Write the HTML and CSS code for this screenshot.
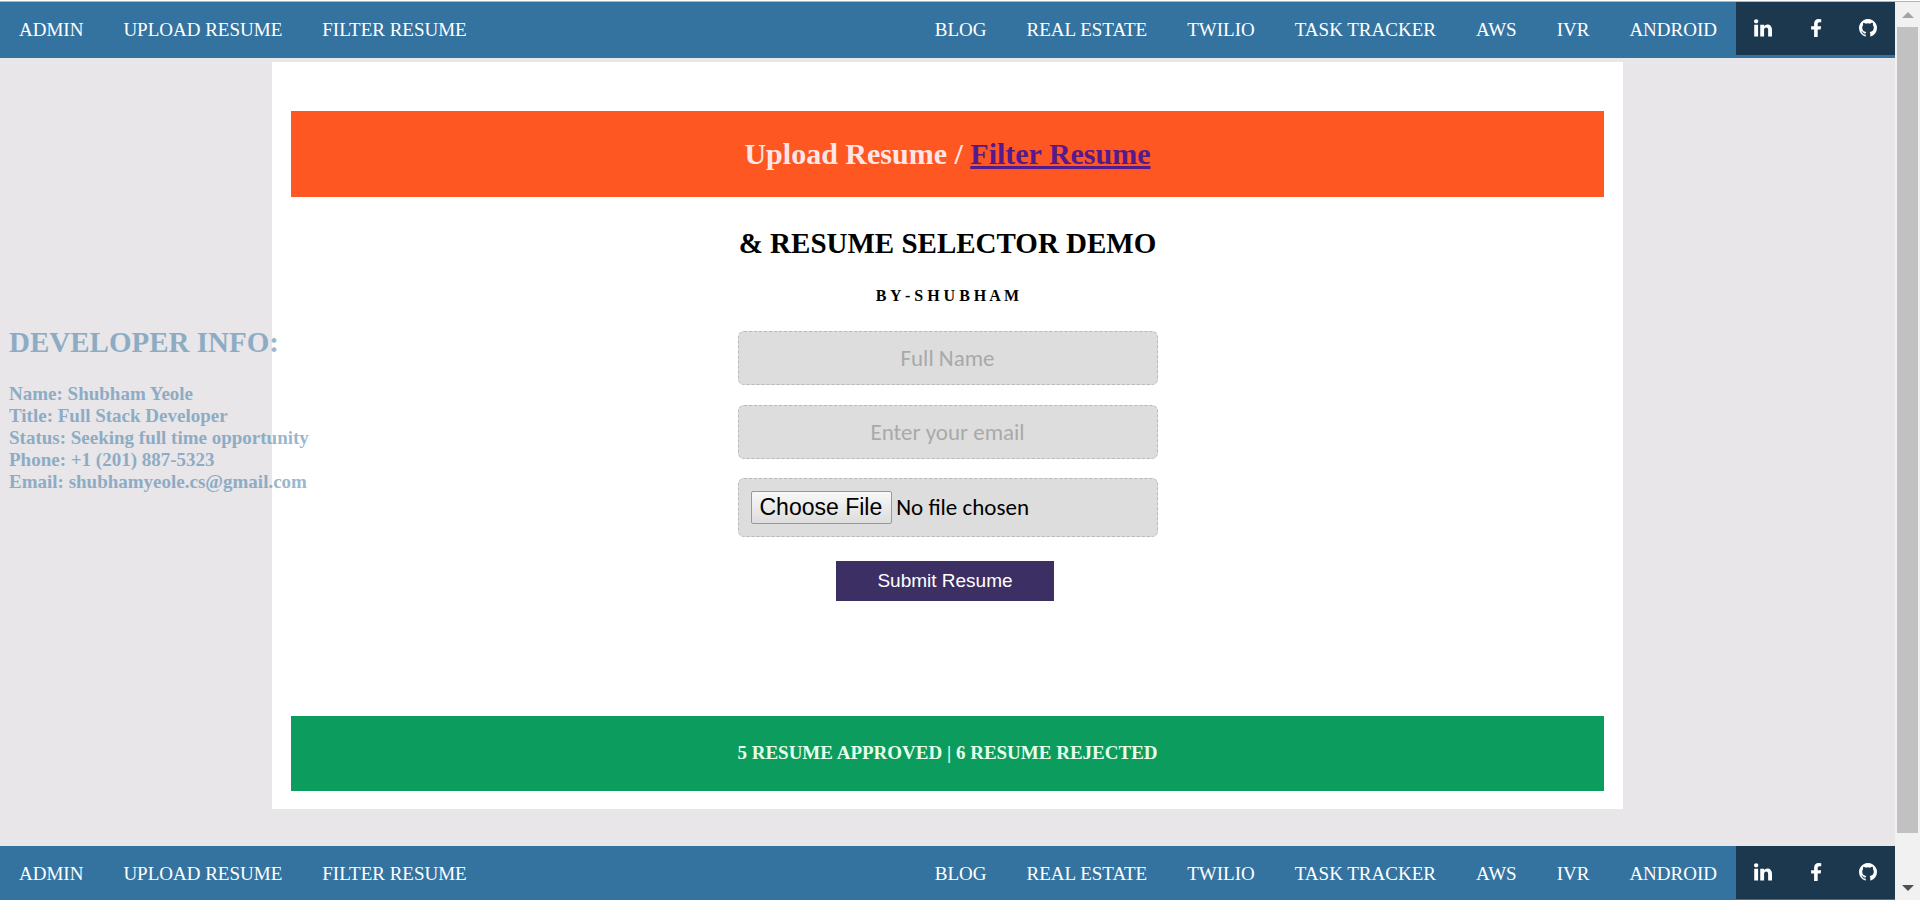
FILE: index.html
```html
<!DOCTYPE html>
<html lang="en">
<head>
<meta charset="utf-8">
<title>Resume Selector</title>
<link rel="stylesheet" href="styles.css">
</head>
<body>
<svg class="sprite" aria-hidden="true">
  <symbol id="linkedin" viewBox="0 128 1536 1536"><path d="M349 625v991h-330v-991h330zm21-306q1 73-50.500 122t-135.500 49h-2q-82 0-132-49t-50-122q0-74 51.500-122.500t134.500-48.500 133 48.500 51 122.500zm1166 729v568h-329v-530q0-105-40.500-164.500t-126.500-59.500q-63 0-105.500 34.500t-63.500 85.500q-11 30-11 81v553h-329q2-399 2-647t-1-296l-1-48h329v144h-2q20-32 41-56t56.500-52 87-43.500 114.500-15.500q171 0 275 113.500t104 332.500z"/></symbol>
  <symbol id="facebook" viewBox="128 0 1536 1536"><path d="M1343 12v264h-157q-86 0-116 36t-30 108v189h293l-39 296h-254v759h-306v-759h-255v-296h255v-218q0-186 104-288.500t277-102.500q147 0 228 12z"/></symbol>
  <symbol id="github" viewBox="128 128 1536 1536"><path d="M1664 896q0 251-146.500 451.500t-378.500 277.500q-27 5-39.500-7t-12.500-30v-211q0-97-52-142 57-6 102.500-18t94-39 81-66.500 53-105 20.500-150.500q0-121-79-206 37-91-8-204-28-9-81 11t-92 44l-38 24q-93-26-192-26t-192 26q-16-11-42.500-27t-83.500-38.500-86-13.500q-44 113-7 204-79 85-79 206 0 85 20.500 150t52.500 105 80.500 67 94 39 102.500 18q-40 36-49 103-21 10-45 15t-57 5-65.500-21.500-55.500-62.500q-19-32-48.500-52t-49.500-24l-20-3q-21 0-29 4.500t-5 11.500 9 14 13 12l7 5q22 10 43.500 38t31.500 51l10 23q13 38 44 61.500t67 30 69.500 7 55.500-3.500l23-4q0 38 .5 89t.5 54q0 18-13 30t-40 7q-232-77-378.500-277.500t-146.500-451.500q0-209 103-385.500t279.500-279.500 385.500-103 385.500 103 279.500 279.500 103 385.500z"/></symbol>
</svg>
<div class="window">
  <div class="page">
    <nav class="nav" aria-label="Top">
      <div class="links"><a href="#">ADMIN</a><a href="#">UPLOAD RESUME</a><a href="#">FILTER RESUME</a></div>
      <div class="links"><a href="#">BLOG</a><a href="#">REAL ESTATE</a><a href="#">TWILIO</a><a href="#">TASK TRACKER</a><a href="#">AWS</a><a href="#">IVR</a><a href="#">ANDROID</a></div>
      <div class="socials">
        <a href="#" aria-label="LinkedIn"><svg><use href="#linkedin"/></svg></a>
        <a href="#" aria-label="Facebook"><svg><use href="#facebook"/></svg></a>
        <a href="#" aria-label="GitHub"><svg><use href="#github"/></svg></a>
      </div>
    </nav>
    <main class="panel">
      <h2 class="banner">Upload Resume / <a href="#">Filter Resume</a></h2>
      <h2 class="title">&amp; RESUME SELECTOR DEMO</h2>
      <h5 class="byline">B Y - S H U B H A M</h5>
      <form class="form">
        <input class="field" type="text" placeholder="Full Name" aria-label="Full Name">
        <input class="field" type="email" placeholder="Enter your email" aria-label="Enter your email">
        <input class="field file" type="file" aria-label="Resume file">
        <button class="submit" type="button">Submit Resume</button>
      </form>
      <h4 class="stats">5 RESUME APPROVED | 6 RESUME REJECTED</h4>
    </main>
    <nav class="nav" aria-label="Bottom">
      <div class="links"><a href="#">ADMIN</a><a href="#">UPLOAD RESUME</a><a href="#">FILTER RESUME</a></div>
      <div class="links"><a href="#">BLOG</a><a href="#">REAL ESTATE</a><a href="#">TWILIO</a><a href="#">TASK TRACKER</a><a href="#">AWS</a><a href="#">IVR</a><a href="#">ANDROID</a></div>
      <div class="socials">
        <a href="#" aria-label="LinkedIn"><svg><use href="#linkedin"/></svg></a>
        <a href="#" aria-label="Facebook"><svg><use href="#facebook"/></svg></a>
        <a href="#" aria-label="GitHub"><svg><use href="#github"/></svg></a>
      </div>
    </nav>
    <aside class="developer">
      <h2>DEVELOPER INFO:</h2>
      <p>Name: Shubham Yeole<br>Title: Full Stack Developer<br>Status: Seeking full time opportunity<br>Phone: +1 (201) 887-5323<br>Email: shubhamyeole.cs@gmail.com</p>
    </aside>
  </div>
  <div class="scrollbar" aria-hidden="true">
    <svg class="arrow up" viewBox="0 0 12 6"><path d="M0 6L6 0L12 6z"/></svg>
    <div class="track"><div class="thumb"></div></div>
    <svg class="arrow down" viewBox="0 0 12 6"><path d="M0 0L6 6L12 0z"/></svg>
  </div>
</div>
</body>
</html>
```
FILE: styles.css
```css
* { box-sizing: border-box; }

body {
  margin: 0;
  background: #fff;
  font-family: "Liberation Serif", "Times New Roman", serif;
  font-size: 19px;
  line-height: 22px;
}

h2, h4, h5, p { margin: 0; }

.sprite { display: none; }

.window {
  display: flex;
  height: 100vh;
  padding-top: 1px;
  overflow: hidden;
}

.page {
  position: relative;
  flex: 1;
  border-top: 1px solid #b4b4b4;
  background: #e8e6e9;
}

.nav {
  display: flex;
  align-items: flex-start;
  height: 56px;
  background: #3473a0;
}

.links {
  display: flex;
  gap: 2px;
}

.links:first-child { margin-right: auto; }

.links a {
  padding: 17px 19px;
  color: #fff;
  text-decoration: none;
  white-space: nowrap;
}

.socials {
  display: flex;
  justify-content: space-between;
  width: 159px;
  height: 53px;
  padding: 0 18px;
  background: #1b384f;
}

.socials a { padding-top: 17px; }

.socials svg {
  display: block;
  width: 18px;
  height: 18px;
  fill: #fff;
}

.panel {
  width: calc(70% + 24px);
  margin: 4px auto 37px;
  padding: 49px 19px 18px;
  background: #fff;
  text-align: center;
}

.banner {
  padding: 26px 0;
  background: #ff5722;
  color: #ffe6e6;
  font-size: 30px;
  line-height: 34px;
}

.banner a { color: #551a8b; }

.title {
  margin-top: 29px;
  font-size: 29px;
  line-height: 34px;
}

.byline {
  margin-top: 26px;
  font-size: 16px;
  line-height: 20px;
}

.form {
  display: flex;
  flex-direction: column;
  align-items: center;
  margin-top: 25px;
}

.field {
  width: 420px;
  height: 54px;
  margin-bottom: 20px;
  padding: 0 12px;
  border: 1px dashed #b9b9b9;
  border-radius: 6px;
  background: #ddd;
  color: #000;
  font-family: Carlito, Calibri, Lato, sans-serif;
  font-size: 23px;
  text-align: center;
}

.field::placeholder { color: #a9a9a9; }

.file {
  height: 59px;
  margin: -1px 0 24px;
  padding: 12px;
  text-align: left;
}

.file::file-selector-button {
  height: 33px;
  padding: 0 9px 0 8px;
  border: 1px solid #999;
  border-radius: 2px;
  background: linear-gradient(#f8f8f8, #ddd);
  color: #000;
  font-family: "Liberation Sans", Arial, sans-serif;
  font-size: 23px;
}

.submit {
  width: 218px;
  height: 40px;
  margin-right: 5px;
  padding: 0;
  border: 0;
  background: #3c2f63;
  color: #fff;
  font-family: "Liberation Sans", Arial, sans-serif;
  font-size: 19px;
}

.stats {
  margin-top: 115px;
  padding: 26px 0 27px;
  background: #0c9c5d;
  color: #e6ffe9;
  font-size: 19px;
}

.developer {
  position: absolute;
  top: 323px;
  left: 9px;
  color: #3473a0;
  font-weight: bold;
  opacity: 0.5;
}

.developer h2 {
  margin-bottom: 24px;
  font-size: 29px;
  line-height: 34px;
}

.scrollbar {
  display: flex;
  flex-direction: column;
  align-items: center;
  width: 25px;
  border-top: 1px solid #b4b4b4;
  background: #f1f1f1;
}

.arrow {
  width: 12px;
  height: 6px;
  margin: 10px 0 9px;
}

.up { fill: #a3a3a3; }
.down { fill: #505050; }

.track {
  flex: 1;
  width: 21px;
}

.thumb {
  height: 95%;
  background: #c1c1c1;
}
```
